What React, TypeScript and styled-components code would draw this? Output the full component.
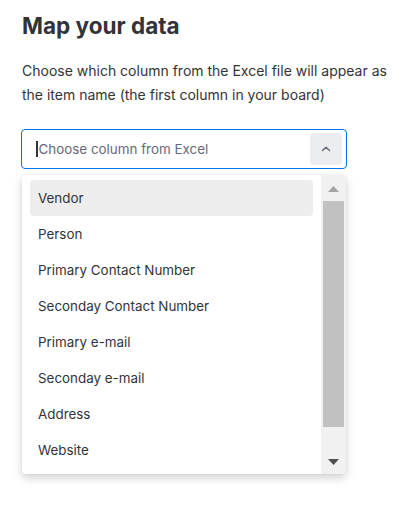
import React from "react";
import styled, { createGlobalStyle } from "styled-components";

const GlobalStyle = createGlobalStyle`
  html, body {
    margin: 0;
    padding: 0;
    background: #ffffff;
  }
  body {
    font-family: Inter, "Noto Sans", sans-serif;
    color: #323338;
  }
`;

const Page = styled.div`
  width: 408px;
  height: 514px;
  padding: 10px 0 0 22px;
  box-sizing: border-box;
`;

const Title = styled.h2`
  margin: 0;
  font-size: 22.5px;
  line-height: 32px;
  font-weight: 700;
  color: #323338;
`;

const Description = styled.p`
  margin: 17px 0 0;
  width: 380px;
  font-size: 14px;
  line-height: 24px;
  font-weight: 400;
  color: #323338;
`;

const Combobox = styled.div`
  margin-top: 22px;
  margin-left: -1px;
  width: 326px;
  height: 40px;
  box-sizing: border-box;
  padding: 0 4px 0 14px;

  display: flex;
  align-items: center;

  border: 1px solid #0073ea;
  border-radius: 4px;
`;

const Caret = styled.span`
  width: 1.5px;
  height: 16px;
  background: #323338;
  margin-right: 1px;
`;

const Placeholder = styled.span`
  flex: 1;
  font-size: 13.4px;
  color: #676879;
`;

const ToggleButton = styled.div`
  width: 32px;
  height: 32px;
  border-radius: 4px;
  background: #ecedf0;

  display: flex;
  align-items: center;
  justify-content: center;
`;

const Menu = styled.div`
  margin-top: 6px;
  width: 324px;
  height: 299px;
  display: flex;
  background: #ffffff;
  border-radius: 4px;
  box-shadow: 0 4px 10px rgba(0, 0, 0, 0.18), 0 0 2px rgba(0, 0, 0, 0.08);
  overflow: hidden;
`;

const OptionList = styled.ul`
  flex: 1;
  margin: 0;
  padding: 5px 8px 0;
  list-style: none;
  overflow: hidden;
`;

interface OptionProps {
  $active?: boolean;
}

const Option = styled.li<OptionProps>`
  height: 36px;
  padding: 0 8px;
  display: flex;
  align-items: center;

  font-size: 13.4px;
  color: #323338;
  border-radius: 4px;
  background: ${(props) => (props.$active ? "#ededed" : "transparent")};
`;

const Scrollbar = styled.div`
  width: 25px;
  padding: 1px 2px 0;
  box-sizing: border-box;
  background: #f1f1f1;
  display: flex;
  flex-direction: column;
  align-items: center;
`;

const ArrowSlot = styled.div`
  height: 25px;
  width: 100%;
  display: flex;
  align-items: center;
  justify-content: center;
`;

const Thumb = styled.div`
  width: 100%;
  height: 226px;
  background: #c1c1c1;
`;

const Track = styled.div`
  flex: 1;
`;

const options = [
  "Vendor",
  "Person",
  "Primary Contact Number",
  "Seconday Contact Number",
  "Primary e-mail",
  "Seconday e-mail",
  "Address",
  "Website",
];

function App() {
  return (
    <>
      <GlobalStyle />
      <Page>
        <Title>Map your data</Title>
        <Description>
          Choose which column from the Excel file will appear as the item name
          (the first column in your board)
        </Description>
        <Combobox>
          <Caret />
          <Placeholder>Choose column from Excel</Placeholder>
          <ToggleButton>
            <svg width="12" height="8" viewBox="0 0 12 8" fill="none">
              <path
                d="M2.5 5.5L6 2.2L9.5 5.5"
                stroke="#676879"
                strokeWidth="1.5"
                strokeLinecap="round"
                strokeLinejoin="round"
              />
            </svg>
          </ToggleButton>
        </Combobox>
        <Menu>
          <OptionList>
            {options.map((name, i) => (
              <Option key={name} $active={i === 0}>
                {name}
              </Option>
            ))}
          </OptionList>
          <Scrollbar>
            <ArrowSlot>
              <svg width="11" height="6" viewBox="0 0 11 6">
                <path d="M5.5 0L11 6H0Z" fill="#a3a3a3" />
              </svg>
            </ArrowSlot>
            <Thumb />
            <Track />
            <ArrowSlot>
              <svg width="11" height="6" viewBox="0 0 11 6">
                <path d="M0 0H11L5.5 6Z" fill="#505050" />
              </svg>
            </ArrowSlot>
          </Scrollbar>
        </Menu>
      </Page>
    </>
  );
}

export default App;
